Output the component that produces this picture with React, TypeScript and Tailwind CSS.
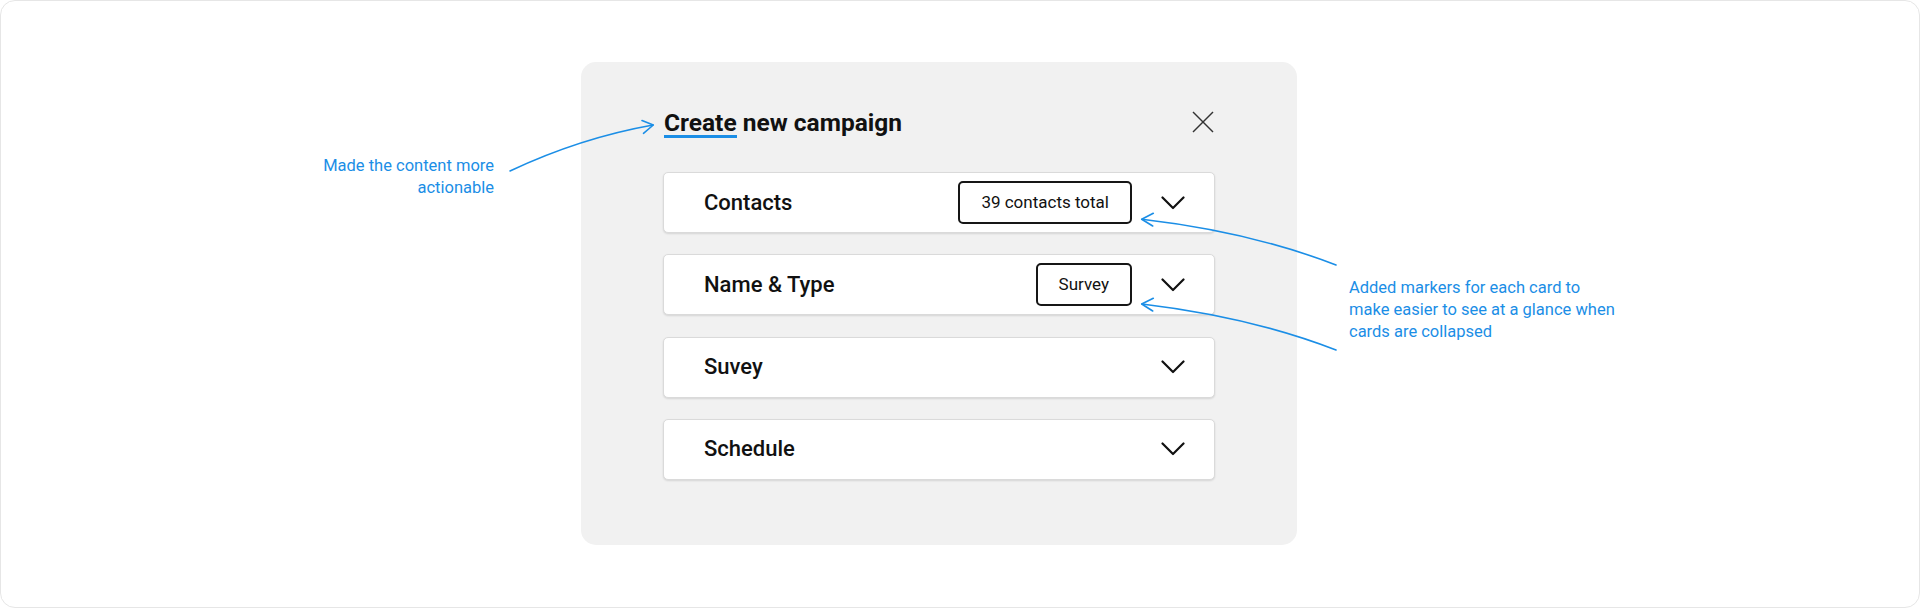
import React from "react";

const Chevron = () => (
  <svg width="24" height="14" viewBox="0 0 24 14" fill="none" className="shrink-0">
    <polyline points="1.5,1.5 12,12 22.5,1.5" stroke="#111" strokeWidth="2.2" strokeLinecap="round" strokeLinejoin="round" />
  </svg>
);

const Card = ({ label, badge }: { label: string; badge?: string }) => (
  <div className="flex h-[61px] items-center rounded-[5px] border border-[#dadada] bg-white pl-[40px] pr-[29px] shadow-[0_1px_2px_rgba(0,0,0,0.12)]">
    <span className="flex-1 text-[22px] font-medium leading-[28px] text-[#111]">{label}</span>
    {badge && (
      <span className="mr-[29px] flex h-[43px] items-center rounded-[5px] border-2 border-[#161616] px-[21px] text-[17px] leading-none text-[#111]">
        {badge}
      </span>
    )}
    <Chevron />
  </div>
);

export default function App() {
  return (
    <div className="h-[609px] w-[1920px] bg-white [font-family:Roboto,'Liberation_Sans',sans-serif]">
      <div className="relative flex h-[608px] w-[1920px] rounded-[15px] border border-[#e6e6e6] bg-white">
        <div className="w-[580px] shrink-0 pr-[87px] pt-[154px] text-right text-[16.5px] leading-[22px] text-[#1b8ee6]">
          Made the content more
          <br />
          actionable
        </div>

        <div className="mt-[61px] h-[483px] w-[716px] shrink-0 rounded-[15px] bg-[#f1f1f1] px-[82px] pt-[47px]">
          <div className="flex h-[28px] items-center justify-between">
            <h1 className="pl-[1px] text-[24.5px] font-bold leading-[28px] text-[#111]">
              <span className="relative">
                Create
                <span className="absolute left-0 right-0 top-[27px] h-[3px] bg-[#1b8ee6]" />
              </span>{" "}
              new campaign
            </h1>
            <svg width="22" height="22" viewBox="0 0 22 22" fill="none" className="mr-[1px] mb-[3px]">
              <line x1="1" y1="1" x2="21" y2="21" stroke="#333" strokeWidth="1.4" />
              <line x1="21" y1="1" x2="1" y2="21" stroke="#333" strokeWidth="1.4" />
            </svg>
          </div>

          <div className="mt-[35px] flex flex-col gap-[21.25px]">
            <Card label="Contacts" badge="39 contacts total" />
            <Card label="Name & Type" badge="Survey" />
            <Card label="Suvey" />
            <Card label="Schedule" />
          </div>
        </div>

        <div className="shrink-0 pl-[52px] pt-[276px] text-[16.5px] leading-[22px] text-[#1b8ee6]">
          Added markers for each card to
          <br />
          make easier to see at a glance when
          <br />
          cards are collapsed
        </div>

        <svg
          className="pointer-events-none absolute left-[-1px] top-[-1px]"
          width="1920"
          height="609"
          viewBox="0 0 1920 609"
          fill="none"
        >
          <g stroke="#1b8ee6" strokeWidth="1.6" strokeLinecap="round" strokeLinejoin="round" fill="none">
            <path d="M510 171 Q 580 138 653 125" />
            <path d="M642 120.5 L653.3 125 L643.5 133.3" />
            <path d="M1336 265 Q 1251 232 1142 219.3" />
            <path d="M1153.3 213.3 L1141.7 219.3 L1152.7 226" />
            <path d="M1336 350 Q 1251 317 1142 304" />
            <path d="M1153.3 298.3 L1141.7 304 L1152.7 311" />
          </g>
        </svg>
      </div>
    </div>
  );
}
